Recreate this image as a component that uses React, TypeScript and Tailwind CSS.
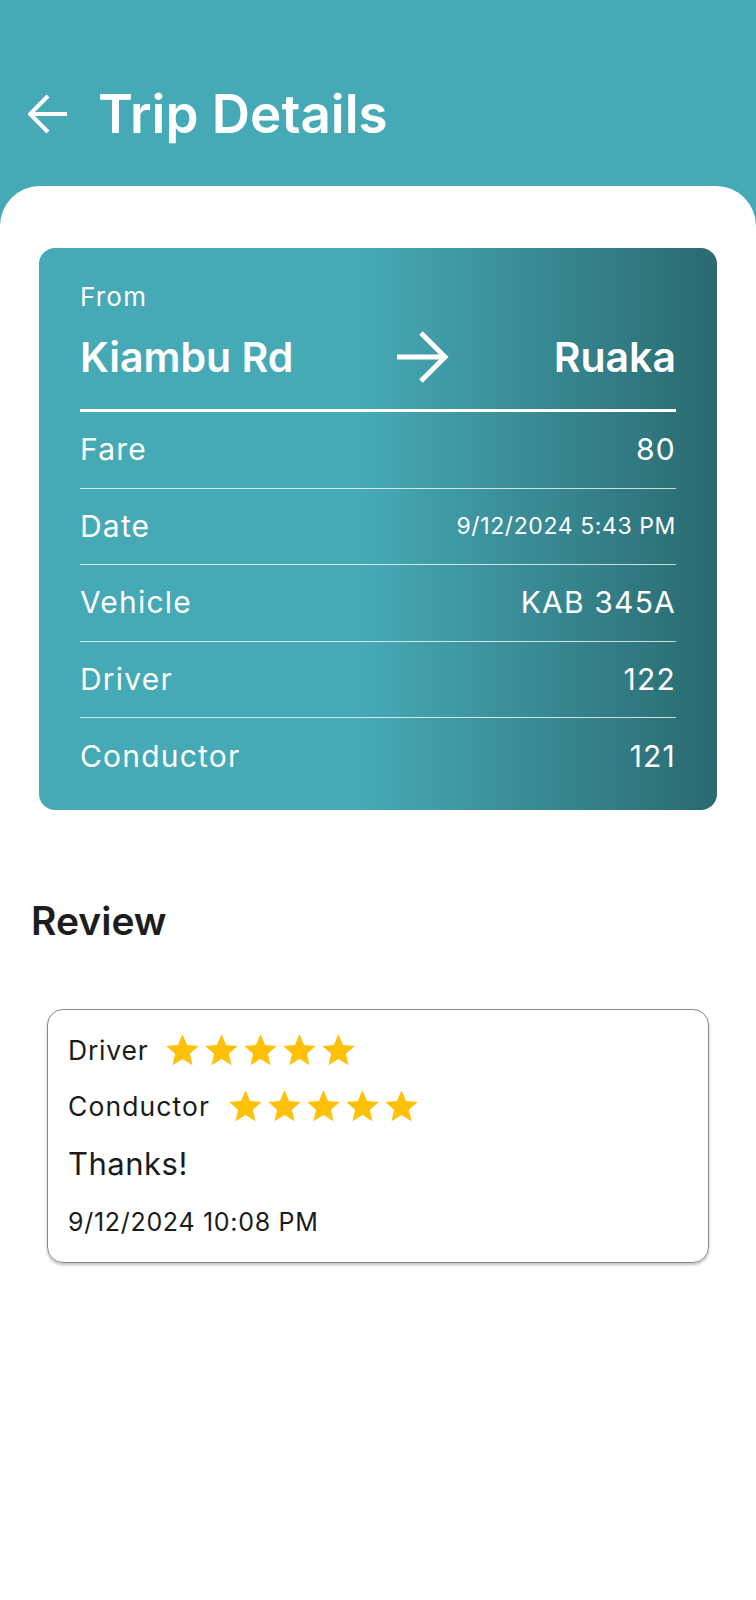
import React from "react";

const rows = [
  { label: "Fare", value: "80" },
  { label: "Date", value: "9/12/2024 5:43 PM", small: true },
  { label: "Vehicle", value: "KAB 345A" },
  { label: "Driver", value: "122" },
  { label: "Conductor", value: "121" },
];

const Star = () => (
  <svg viewBox="0 0 24 24" className="w-[39px] h-[39px] shrink-0" fill="#FFC107">
    <path d="M12 17.27L18.18 21l-1.64-7.03L22 9.24l-7.19-.61L12 2 9.19 8.63 2 9.24l5.46 4.73L5.82 21z" />
  </svg>
);

const Stars = () => (
  <div className="flex">
    {[0, 1, 2, 3, 4].map((i) => (
      <Star key={i} />
    ))}
  </div>
);

export default function App() {
  return (
    <div
      className="min-h-[1600px] flex flex-col bg-[#46a9b6]"
      style={{ fontFamily: "Inter, 'Noto Sans', sans-serif" }}
    >
      {/* Header */}
      <div className="h-[186px] flex items-center pl-[28px] pt-[42px] gap-[30px] text-white">
        <svg viewBox="0 0 40 40" className="w-[40px] h-[40px]" fill="none" stroke="white" strokeWidth="4">
          <path d="M39 20H3" />
          <path d="M20 2L2 20l18 18" />
        </svg>
        <h1 className="text-[53px] leading-none font-semibold">Trip Details</h1>
      </div>

      {/* Sheet */}
      <div className="flex-1 bg-white rounded-t-[40px] pt-[62px]">
        {/* Trip card */}
        <div className="mx-[39px] rounded-[16px] px-[41px] pt-[34px] pb-[15px] text-white bg-[linear-gradient(to_right,#46a9b6_0%,#46a9b6_48%,#2a6a70_100%)]">
          <div className="text-[26px] leading-[30px] tracking-[1.2px]">From</div>
          <div className="mt-[20px] flex items-center justify-between h-[50px]">
            <span className="text-[41px] leading-none font-semibold">Kiambu Rd</span>
            <svg viewBox="0 0 52 52" className="w-[52px] h-[52px]" fill="none" stroke="white" strokeWidth="5">
              <path d="M0 26H49" />
              <path d="M24 2l24 24-24 24" />
            </svg>
            <span className="text-[41px] leading-none font-semibold">Ruaka</span>
          </div>
          <div className="mt-[27px] h-[3px] bg-white" />
          {rows.map((r, i) => (
            <div
              key={r.label}
              className={
                "h-[76.5px] flex items-center justify-between " +
                (i < rows.length - 1 ? "border-b border-white/75" : "")
              }
            >
              <span className="text-[30px] tracking-[1.2px]">{r.label}</span>
              <span className={r.small ? "text-[23px] tracking-[0.6px]" : "text-[30px] tracking-[1.2px]"}>
                {r.value}
              </span>
            </div>
          ))}
        </div>

        {/* Review */}
        <h2 className="mt-[89px] ml-[31px] text-[39px] leading-[44px] font-semibold text-[#1d1d1d]">Review</h2>

        <div className="mt-[66px] mx-[47px] w-[662px] rounded-[16px] border border-[#8a8a8a] shadow-[0_2px_3px_rgba(0,0,0,0.25)] pl-[20px] pt-[18px] pb-[19px] text-[#1b1b1b]">
          <div className="flex items-center gap-[14px] h-[46px]">
            <span className="text-[26.5px] tracking-[0.8px]">Driver</span>
            <Stars />
          </div>
          <div className="mt-[10px] flex items-center gap-[16px] h-[46px]">
            <span className="text-[26.5px] tracking-[1.1px]">Conductor</span>
            <Stars />
          </div>
          <div className="mt-[10px] h-[50px] flex items-center text-[31px] tracking-[0.5px]">Thanks!</div>
          <div className="mt-[13px] h-[40px] flex items-center text-[25px] tracking-[0.7px]">9/12/2024 10:08 PM</div>
        </div>
      </div>
    </div>
  );
}
